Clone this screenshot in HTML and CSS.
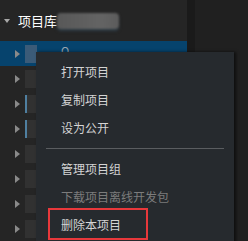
FILE: index.html
```html
<!DOCTYPE html>
<html lang="zh">
<head>
<meta charset="utf-8">
<link rel="stylesheet" href="styles.css">
</head>
<body>
<div class="app">
  <div class="panel">
    <div class="header">
      <span class="caret-down"></span>
      <span class="title">项目库</span>
      <span class="blur-name"></span>
    </div>
    <div class="tree">
      <div class="row selected"><span class="caret"></span><span class="thumb thumb-sel"></span><span class="row-text">Q</span></div>
      <div class="row"><span class="caret"></span><span class="thumb"></span></div>
      <div class="row"><span class="caret"></span><span class="thumb dot"></span></div>
      <div class="row"><span class="caret"></span><span class="thumb dot"></span></div>
      <div class="row"><span class="caret"></span><span class="thumb"></span></div>
      <div class="row"><span class="caret"></span><span class="thumb"></span></div>
      <div class="row"><span class="caret"></span><span class="thumb"></span></div>
      <div class="row"><span class="caret"></span><span class="thumb"></span></div>
    </div>
  </div>
  <div class="divider"></div>
  <div class="rest"></div>

  <div class="menu">
    <div class="item">打开项目</div>
    <div class="item">复制项目</div>
    <div class="item">设为公开</div>
    <div class="sep"></div>
    <div class="item">管理项目组</div>
    <div class="item disabled">下载项目离线开发包</div>
    <div class="item highlight">删除本项目</div>
  </div>
</div>
</body>
</html>
```
FILE: styles.css
```css
html, body {
  margin: 0;
  padding: 0;
  background: #202020;
  overflow: hidden;
}
body {
  font-family: "Noto Sans CJK SC", "Noto Sans", sans-serif;
}
.app {
  position: relative;
  display: flex;
  width: 248px;
  height: 241px;
}
.panel {
  width: 187px;
  background: #252525;
  display: flex;
  flex-direction: column;
}
.divider {
  width: 8px;
  background: #1a1a1a;
}
.rest {
  flex: 1;
  background: #202020;
}
.header {
  height: 42px;
  display: flex;
  align-items: center;
  padding-left: 4px;
  box-sizing: border-box;
  padding-bottom: 0;
}
.caret-down {
  width: 0;
  height: 0;
  border-left: 3px solid transparent;
  border-right: 3px solid transparent;
  border-top: 4px solid #a8a8a8;
  margin-right: 8px;
}
.title {
  color: #ffffff;
  font-size: 13px;
  line-height: 16px;
}
.blur-name {
  width: 62px;
  height: 16px;
  margin-left: 0;
  border-radius: 4px;
  background: linear-gradient(90deg, #585858 0%, #5e5e5e 40%, #646464 70%, #5c5c5c 100%);
  filter: blur(1px);
  box-shadow: 0 2px 2px #2c3a44;
}
.tree {
  display: flex;
  flex-direction: column;
}
.row {
  position: relative;
  height: 25px;
  display: flex;
  align-items: center;
  padding-left: 15px;
}
.row.selected {
  background: #06436d;
}
.caret {
  width: 0;
  height: 0;
  border-top: 4px solid transparent;
  border-bottom: 4px solid transparent;
  border-left: 5px solid #8a8a8a;
  margin-right: 5px;
}
.thumb {
  width: 12px;
  height: 18px;
  background: #313131;
  filter: blur(0.6px);
}
.thumb-sel {
  background: #3b5b78;
}
.thumb.dot {
  box-shadow: inset 2px 0 0 #4f7fa0;
}
.row-text {
  color: #9aa6b0;
  font-size: 11px;
  margin-left: 24px;
  margin-top: -8px;
}
.menu {
  position: absolute;
  left: 36px;
  top: 52px;
  width: 198px;
  height: 200px;
  background: #262a2e;
  box-shadow: 2px 0 3px rgba(0, 0, 0, 0.6);
  padding-top: 6px;
  box-sizing: border-box;
  display: flex;
  flex-direction: column;
}
.item {
  height: 28px;
  line-height: 28px;
  padding-left: 25px;
  color: #d4d4d4;
  font-size: 12px;
  position: relative;
}
.item.disabled {
  color: #7c7c7c;
}
.item.highlight::after {
  content: "";
  position: absolute;
  left: 12px;
  top: -3px;
  width: 100px;
  height: 32px;
  border: 2px solid #e8383b;
  box-sizing: border-box;
}
.sep {
  height: 13px;
  margin: 0 10px;
  display: flex;
  align-items: center;
}
.sep::before {
  content: "";
  flex: 1;
  height: 1px;
  background: #5a5d60;
}
```
